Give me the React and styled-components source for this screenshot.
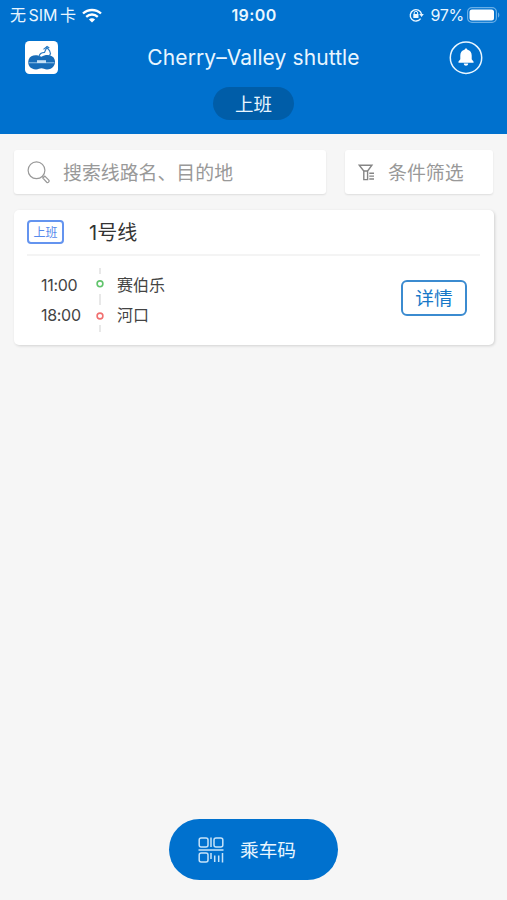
import React from "react";
import styled, { createGlobalStyle } from "styled-components";

const GlobalStyle = createGlobalStyle`
  * {
    box-sizing: border-box;
  }
  body {
    margin: 0;
    background-color: #f6f6f6;
    font-family: Inter, "Noto Sans CJK SC", sans-serif;
  }
`;

const Page = styled.div`
  display: flex;
  flex-direction: column;
  width: 507px;
  height: 900px;
  background-color: #f6f6f6;
`;

const Header = styled.header`
  height: 134px;
  background-color: #0071ce;
  color: #e9f6ff;
`;

const StatusBar = styled.div`
  display: grid;
  grid-template-columns: 1fr auto 1fr;
  align-items: center;
  height: 30px;
  padding: 0 7px 0 10px;
`;

const StatusGroup = styled.div`
  display: flex;
  align-items: center;
  justify-content: ${(props) => (props.$end ? "flex-end" : "flex-start")};
`;

const Carrier = styled.span`
  margin-right: 6px;
  font-size: 16px;
  line-height: 30px;
  word-spacing: -2px;
`;

const Clock = styled.span`
  margin-right: 2px;
  font-size: 16px;
  font-weight: 600;
  line-height: 30px;
  letter-spacing: 0.4px;
`;

const Percent = styled.span`
  margin: 0 3px 0 7px;
  font-size: 16px;
  line-height: 30px;
  letter-spacing: -0.3px;
`;

const TitleRow = styled.div`
  display: flex;
  align-items: center;
  justify-content: space-between;
  height: 55px;
  padding: 0 24px 0 25px;
`;

const Title = styled.h1`
  margin: 1px 0 0;
  font-size: 21px;
  font-weight: 400;
  line-height: 32px;
  letter-spacing: 0.1px;
`;

const ShiftPill = styled.div`
  width: 81px;
  height: 33px;
  margin: 2px auto 0;
  border-radius: 17px;
  background-color: #005da8;
  font-size: 18.5px;
  line-height: 34px;
  text-align: center;
`;

const Tools = styled.div`
  display: flex;
  gap: 19px;
  padding: 16px 14px;
`;

const ToolBox = styled.div`
  display: flex;
  align-items: center;
  width: ${(props) => props.$width};
  height: 44px;
  padding-left: 13px;
  border-radius: 3px;
  background-color: white;
  box-shadow: 0 1px 2px rgba(0, 0, 0, 0.1);
  color: #999999;
`;

const ToolText = styled.span`
  margin-left: ${(props) => props.$gap};
  padding-top: 3px;
  font-size: 18.9px;
  line-height: 41px;
`;

const Card = styled.section`
  width: 480px;
  height: 135px;
  margin-left: 14px;
  padding: 0 14px 0 13px;
  border-radius: 5px;
  background-color: white;
  box-shadow: 1px 1px 3px rgba(0, 0, 0, 0.15);
`;

const CardHead = styled.div`
  display: flex;
  align-items: center;
  height: 46px;
  border-bottom: 2px solid #f4f4f4;
`;

const Tag = styled.span`
  width: 37px;
  height: 24px;
  margin-right: 25px;
  border: 2px solid #6494ef;
  border-radius: 4px;
  color: #5589ec;
  font-size: 12px;
  line-height: 22px;
  text-align: center;
`;

const RouteName = styled.h2`
  margin: 0;
  padding-top: 2px;
  color: #333333;
  font-size: 20px;
  font-weight: 400;
  line-height: 42px;
`;

const CardBody = styled.div`
  display: flex;
  align-items: flex-start;
  height: 89px;
  padding: 12px 14px 0;
`;

const StopColumn = styled.div`
  display: flex;
  flex-direction: column;
  width: ${(props) => props.$width};
  padding-top: 2px;
  color: #444444;
  font-size: 16px;
  line-height: 30px;
  letter-spacing: ${(props) => props.$spacing || "0"};
`;

const Timeline = styled.svg`
  display: block;
  margin-right: 12px;
`;

const DetailButton = styled.button`
  width: 66px;
  height: 36px;
  margin: 12px -1px 0 auto;
  padding: 0;
  border: 2px solid #3b8bd0;
  border-radius: 6px;
  background-color: white;
  color: #1778c8;
  font-family: inherit;
  font-size: 18.7px;
  line-height: 31px;
`;

const Footer = styled.footer`
  display: flex;
  justify-content: center;
  margin-top: auto;
  padding-bottom: 20px;
`;

const CodeButton = styled.button`
  display: flex;
  align-items: center;
  width: 169px;
  height: 61px;
  padding: 0 0 0 29px;
  border: none;
  border-radius: 31px;
  background-color: #0071ce;
  color: #e9f6ff;
  font-family: inherit;
  font-size: 18.7px;
`;

const CodeText = styled.span`
  margin-left: 16px;
  padding-top: 3px;
  line-height: 58px;
`;

const WifiIcon = () => (
  <svg width="20" height="15" viewBox="0 0 20 15" fill="none">
    <path d="M1 5.5C6 .8 14 .8 19 5.5" stroke="white" strokeWidth="2.4" />
    <path d="M4.2 8.8C7.6 5.7 12.4 5.7 15.8 8.8" stroke="white" strokeWidth="2.3" />
    <path d="M10 14.5 6.9 11.4C8.6 9.8 11.4 9.8 13.1 11.4Z" fill="white" />
  </svg>
);

const LockIcon = () => (
  <svg width="15" height="14" viewBox="0 0 15 14" fill="none">
    <path d="M11.6 10.7A5.7 5.7 0 1 1 12.5 6" stroke="#e9f6ff" strokeWidth="1.4" />
    <path d="M10.2 6h4.6l-2.2 3Z" fill="#e9f6ff" />
    <path d="M5.2 6.3V5a1.7 1.7 0 0 1 3.4 0v1.3" stroke="#e9f6ff" />
    <rect x="4.3" y="6" width="5.2" height="4" rx=".6" fill="#e9f6ff" />
  </svg>
);

const BatteryIcon = () => (
  <svg width="33" height="16" viewBox="0 0 33 16">
    <rect x=".6" y=".6" width="28.8" height="14.8" rx="4.4" fill="none" stroke="#69afe7" strokeWidth="1.2" />
    <rect x="2.5" y="2.5" width="24.5" height="11" rx="2.5" fill="white" />
    <path d="M31 5.5c1.8.5 1.8 4.5 0 5Z" fill="#69afe7" />
  </svg>
);

const Logo = () => (
  <svg width="33" height="33" viewBox="0 0 33 33">
    <rect width="33" height="33" rx="4.5" fill="white" />
    <path
      d="M16.5 15.8C12 13.3 5.5 13.5 3.7 18.5c-1.8 5.2 1.6 9.9 7.3 9.9 2.5 0 3.7-1.2 5.5-1.2s3 1.2 5.5 1.2c5.4 0 9.2-4.5 7.7-9.7-1.5-5-8.7-5.9-13.2-2.9Z"
      fill="#176cb8"
    />
    <path d="M14 15.5c.5-2.6 2.8-3.9 5.5-4.1l2.2-5 2.8 3.2 1 3-1.3 2.6" fill="none" stroke="#2d7ec6" strokeWidth="1.2" />
    <path d="M18.5 8.4l3.6-2.9 2.2 1.6" fill="none" stroke="#2d7ec6" strokeWidth="1.2" />
    <path d="M12 19.2h9v3H12Z" fill="#c5e0f5" />
    <path d="M3.8 21.3h8.3v1H3.8ZM21 21.3h8.4v1H21Z" fill="#8fc0e8" />
  </svg>
);

const BellIcon = () => (
  <svg width="34" height="34" viewBox="0 0 34 34">
    <circle cx="17" cy="16.7" r="15.7" fill="none" stroke="#e9f6ff" strokeWidth="1.5" />
    <path
      d="M17 7.6c.8 0 1.3.5 1.4 1.2 2.9.8 4.3 2.9 4.3 5.7v3.8l1.9 2.5c.3.5.1.9-.5.9H9.9c-.6 0-.8-.4-.5-.9l1.9-2.5v-3.8c0-2.8 1.4-4.9 4.3-5.7.1-.7.6-1.2 1.4-1.2ZM14.8 22.5h4.4c0 3-4.4 3-4.4 0Z"
      fill="white"
    />
  </svg>
);

const SearchIcon = () => (
  <svg width="23" height="23" viewBox="0 0 23 23" fill="none" stroke="#999999" strokeWidth="1.2">
    <circle cx="9.5" cy="9.3" r="8.4" />
    <path d="m15.4 15.3 1.5 1.5" />
    <path d="m15.8 17 2-2 4 4.1c1 1.3-.9 3.2-2.1 2.1Z" />
  </svg>
);

const FilterIcon = () => (
  <svg width="17" height="17" viewBox="0 0 17 17" fill="none" stroke="#858585" strokeWidth="1.4">
    <path d="M1.3 1.2h12.6L9.6 7v8.6H5.8V7Z" />
    <path d="M5.8 7h3.8M11.3 9.2H16M11.3 12.1H16M11.3 15H16" />
  </svg>
);

const QrIcon = () => (
  <svg width="26" height="26" viewBox="0 0 26 26" fill="none" stroke="#c6e3f9" strokeWidth="1.5">
    <rect x="1.2" y=".9" width="8.8" height="9" rx="2" />
    <rect x="16" y=".9" width="8.8" height="9" rx="2" />
    <rect x="1.2" y="16" width="8.8" height="9" rx="2" />
    <path d="M13 .5v9.5M.5 13h25M13 16v6M16.7 18.5v6.5M20.7 18.5v6.5M24.5 16v9.5" />
  </svg>
);

const stops = [
  { time: "11:00", name: "赛伯乐" },
  { time: "18:00", name: "河口" },
];

const RouteCard = () => {
  return (
    <Card>
      <CardHead>
        <Tag>上班</Tag>
        <RouteName>1号线</RouteName>
      </CardHead>
      <CardBody>
        <StopColumn $width="54px" $spacing="-0.3px">
          {stops.map((stop) => (
            <span key={stop.time}>{stop.time}</span>
          ))}
        </StopColumn>
        <Timeline width="10" height="66" viewBox="0 0 10 66" fill="none">
          <path d="M5 0v6M5 26v11M5 57v7" stroke="#e8e8e8" strokeWidth="2" />
          <circle cx="5" cy="15.8" r="2.9" stroke="#61c46c" strokeWidth="1.6" />
          <circle cx="5" cy="48" r="2.9" stroke="#f17070" strokeWidth="1.6" />
        </Timeline>
        <StopColumn $width="100px">
          {stops.map((stop) => (
            <span key={stop.name}>{stop.name}</span>
          ))}
        </StopColumn>
        <DetailButton>详情</DetailButton>
      </CardBody>
    </Card>
  );
};

const App = () => {
  return (
    <>
      <GlobalStyle />
      <Page>
        <Header>
          <StatusBar>
            <StatusGroup>
              <Carrier>无 SIM 卡</Carrier>
              <WifiIcon />
            </StatusGroup>
            <Clock>19:00</Clock>
            <StatusGroup $end>
              <LockIcon />
              <Percent>97%</Percent>
              <BatteryIcon />
            </StatusGroup>
          </StatusBar>
          <TitleRow>
            <Logo />
            <Title>Cherry–Valley shuttle</Title>
            <BellIcon />
          </TitleRow>
          <ShiftPill>上班</ShiftPill>
        </Header>
        <Tools>
          <ToolBox $width="312px">
            <SearchIcon />
            <ToolText $gap="13px">搜索线路名、目的地</ToolText>
          </ToolBox>
          <ToolBox $width="148px">
            <FilterIcon />
            <ToolText $gap="13px">条件筛选</ToolText>
          </ToolBox>
        </Tools>
        <RouteCard />
        <Footer>
          <CodeButton>
            <QrIcon />
            <CodeText>乘车码</CodeText>
          </CodeButton>
        </Footer>
      </Page>
    </>
  );
};

export default App;
